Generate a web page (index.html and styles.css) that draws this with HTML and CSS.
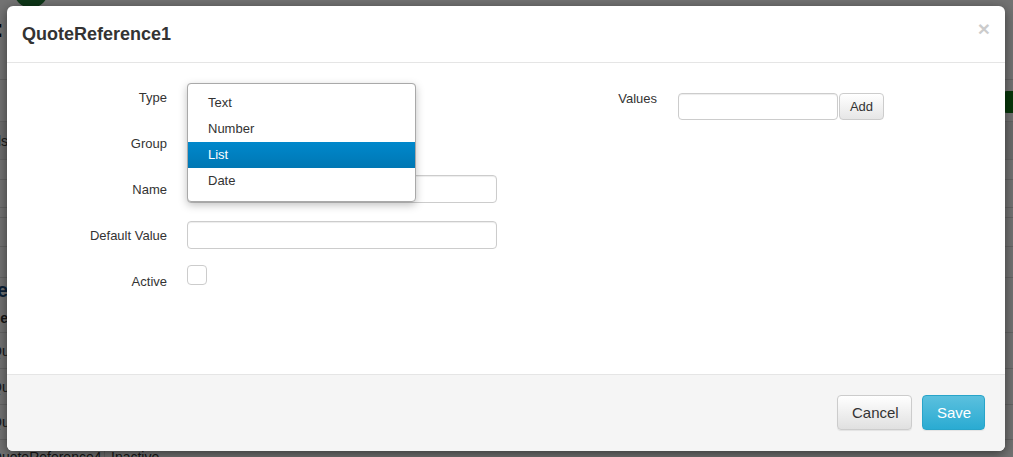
FILE: index.html
```html
<!DOCTYPE html>
<html>
<head>
<meta charset="utf-8">
<link rel="stylesheet" href="styles.css">
</head>
<body>
<div class="page">
  <div class="page-head">
    <span class="page-mark">:</span>
    <span class="page-logo"></span>
  </div>
  <div class="page-row h42"></div>
  <div class="page-row band h38"><span class="cut">Fields</span></div>
  <div class="page-row h20"></div>
  <div class="page-row h28"></div>
  <div class="page-row h10"></div>
  <div class="page-row h29"></div>
  <div class="page-row h31"></div>
  <div class="page-row h26 heading"><span class="cut">Reference</span></div>
  <div class="page-row h29 bold"><span class="cut">Name</span></div>
  <div class="page-row h36"><span class="cut2">QuoteReference1</span></div>
  <div class="page-row h36"><span class="cut2">QuoteReference2</span></div>
  <div class="page-row h35"><span class="cut2">QuoteReference3</span></div>
  <div class="page-row last"><span class="cut2 cellname">QuoteReference4</span><span class="cell">Inactive</span></div>
  <div class="page-green"></div>
</div>
<div class="backdrop"></div>
<div class="modal">
  <div class="modal-header">
    <h3 class="modal-title">QuoteReference1</h3>
    <span class="close">&times;</span>
  </div>
  <div class="modal-body">
    <div class="form-left">
      <div class="form-row">
        <label class="form-label">Type</label>
        <div class="field">
          <div class="input select"></div>
          <ul class="dropdown">
            <li class="opt">Text</li>
            <li class="opt">Number</li>
            <li class="opt active">List</li>
            <li class="opt">Date</li>
          </ul>
        </div>
      </div>
      <div class="form-row">
        <label class="form-label">Group</label>
        <div class="field"><div class="input select"></div></div>
      </div>
      <div class="form-row">
        <label class="form-label">Name</label>
        <div class="field"><div class="input"></div></div>
      </div>
      <div class="form-row">
        <label class="form-label">Default Value</label>
        <div class="field"><div class="input"></div></div>
      </div>
      <div class="form-row">
        <label class="form-label">Active</label>
        <div class="field"><span class="checkbox"></span></div>
      </div>
    </div>
    <div class="form-right">
      <label class="form-label right-label">Values</label>
      <div class="append">
        <div class="input small"></div>
        <button class="btn btn-add">Add</button>
      </div>
    </div>
  </div>
  <div class="modal-footer">
    <button class="btn btn-lg btn-default">Cancel</button>
    <button class="btn btn-lg btn-info">Save</button>
  </div>
</div>
</body>
</html>
```
FILE: styles.css
```css
* { box-sizing: border-box; }
html, body { margin: 0; padding: 0; }
body {
  width: 1013px;
  height: 457px;
  overflow: hidden;
  font-family: "Liberation Sans", Arial, sans-serif;
  font-size: 13px;
  color: #333;
  background: #fff;
  position: relative;
}

/* underlying page */
.page { width: 1013px; height: 457px; overflow: hidden; position: relative; }
.page-head { height: 80px; border-bottom: 1px solid #ddd; position: relative; }
.page-logo {
  position: absolute; left: 14px; top: -26px;
  width: 34px; height: 34px; border-radius: 50%;
  background: #1f7a35;
}
.page-mark { position: absolute; left: -5px; top: 10px; font-size: 26px; font-weight: bold; line-height: 36px; color: #000; }
.page-row { border-bottom: 1px solid #ddd; display: flex; align-items: center; font-size: 14px; white-space: nowrap; }
.page-row.band { background: #f0f0f0; }
.h42 { height: 42px; } .h38 { height: 38px; } .h20 { height: 20px; } .h28 { height: 28px; } .h26 { height: 26px; }
.h10 { height: 10px; } .h29 { height: 29px; } .h31 { height: 31px; } .h36 { height: 36px; } .h35 { height: 35px; }
.page-row.bold { font-weight: bold; }
.page-row.heading { font-size: 20px; font-weight: bold; color: #1a4a7a; border-bottom-color: transparent; }
.page-row.last { height: 40px; align-items: flex-start; padding-top: 9px; }
.cut { display: inline-block; width: 120px; margin-left: -112px; text-align: right; }
.cut2 { margin-left: -9px; }
.cellname { width: 114px; border-right: 1px solid #ddd; padding-bottom: 10px; }
.cell { padding-left: 6px; }
.page-green { position: absolute; left: 1003px; top: 91px; width: 20px; height: 22px; border-radius: 4px; background: #107a18; }

.backdrop { position: absolute; inset: 0; background: rgba(0,0,0,0.55); }

/* modal */
.modal {
  position: absolute;
  left: 7px; top: 6px;
  width: 998px; height: 445px;
  background: #fff;
  border-radius: 6px;
  box-shadow: 0 3px 12px rgba(0,0,0,0.5);
  display: flex;
  flex-direction: column;
}
.modal-header {
  height: 57px;
  padding: 15px;
  border-bottom: 1px solid #e5e5e5;
  display: flex;
  justify-content: space-between;
  align-items: flex-start;
}
.modal-title { margin: 0; font-size: 18px; line-height: 26px; font-weight: bold; color: #333; }
.close { font-size: 21px; font-weight: bold; color: #000; opacity: 0.2; line-height: 16px; }

.modal-body { flex: 1; padding: 20px 15px; display: flex; align-items: flex-start; }
.form-left { display: flex; flex-direction: column; gap: 18px; }
.form-row { display: flex; gap: 20px; align-items: flex-start; }
.form-label { width: 145px; height: 28px; text-align: right; line-height: 26px; padding-top: 2px; font-size: 13px; color: #333; }
.field { width: 310px; position: relative; }
.input {
  height: 28px;
  border: 1px solid #ccc;
  border-radius: 4px;
  background: #fff;
  box-shadow: inset 0 1px 1px rgba(0,0,0,0.075);
}
.input.select { width: 229px; }
.checkbox {
  display: block;
  width: 20px; height: 20px;
  margin-top: -2px;
  border: 1px solid #ccc;
  border-radius: 4px;
  background: #fff;
}

.dropdown {
  position: absolute;
  z-index: 10;
  left: 0; top: 0;
  width: 229px; height: 119px;
  margin: 0;
  padding: 6px 0 0;
  list-style: none;
  background: #fff;
  border: 1px solid #a9a9a9;
  border-radius: 4px;
  box-shadow: 0 3px 8px rgba(0,0,0,0.25);
  overflow: hidden;
}
.opt { height: 26px; line-height: 26px; padding-left: 20px; font-size: 13px; color: #333; overflow: hidden; }
.opt.active { color: #fff; background: linear-gradient(#0088cc, #0077b3); }

.form-right { display: flex; align-items: flex-start; gap: 21px; margin-left: 60px; padding-top: 5px; }
.right-label { width: 100px; height: auto; line-height: 18px; padding-top: 2px; }
.append { display: flex; gap: 1px; margin-top: 5px; }
.input.small { width: 160px; height: 27px; }

.btn {
  font-family: "Liberation Sans", Arial, sans-serif;
  border: 1px solid #ccc;
  border-radius: 4px;
  color: #333;
  cursor: pointer;
  padding: 0;
}
.btn-add {
  width: 45px; height: 27px;
  font-size: 13px;
  background: linear-gradient(#fff, #e6e6e6);
}
.modal-footer {
  height: 77px;
  padding: 20px 20px 21px;
  border-top: 1px solid #e5e5e5;
  background: #f5f5f5;
  border-radius: 0 0 6px 6px;
  display: flex;
  justify-content: flex-end;
  gap: 10px;
}
.btn-lg { height: 35px; font-size: 15px; padding: 0 14px; }
.btn-default { width: 75px; background: linear-gradient(#fff, #e0e0e0); border-color: #ccc; box-shadow: 0 1px 1px rgba(0,0,0,0.075); }
.btn-info { width: 63px; color: #fff; background: linear-gradient(#5bc0de, #2aabd2); border-color: #28a4c9; box-shadow: 0 1px 1px rgba(0,0,0,0.075); }
```
